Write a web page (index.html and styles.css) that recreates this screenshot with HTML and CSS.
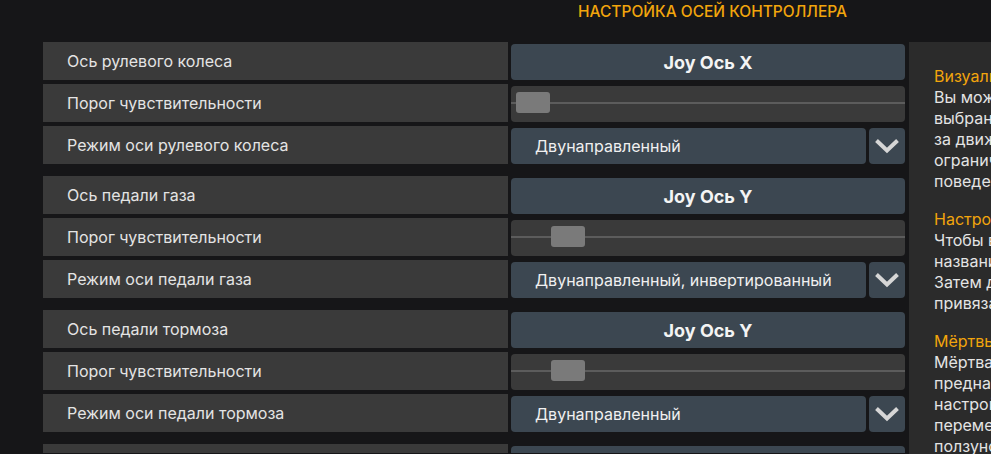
FILE: index.html
```html
<!DOCTYPE html>
<html lang="ru">
<head>
    <meta charset="UTF-8">
    <meta name="viewport" content="width=device-width, initial-scale=1.0">
    <title>Настройка осей контроллера</title>
    <link rel="stylesheet" href="styles.css">
</head>
<body>

    <header class="page-title">
        <h1>НАСТРОЙКА ОСЕЙ КОНТРОЛЛЕРА</h1>
    </header>

    <div class="settings">
        <div class="groups">

            <!-- Рулевое колесо -->
            <div class="group">
                <div class="row">
                    <div class="label">Ось рулевого колеса</div>
                    <button class="bind-btn">Joy Ось X</button>
                </div>
                <div class="row">
                    <div class="label">Порог чувствительности</div>
                    <div class="slider">
                        <div class="track"></div>
                        <div class="thumb" style="left: 5px"></div>
                    </div>
                </div>
                <div class="row">
                    <div class="label">Режим оси рулевого колеса</div>
                    <div class="dropdown">
                        <div class="dropdown-value">Двунаправленный</div>
                        <div class="dropdown-arrow">
                            <svg width="26" height="16" viewBox="0 0 26 16"><polyline points="2.5,2.5 13,12.5 23.5,2.5"/></svg>
                        </div>
                    </div>
                </div>
            </div>

            <!-- Педаль газа -->
            <div class="group">
                <div class="row">
                    <div class="label">Ось педали газа</div>
                    <button class="bind-btn">Joy Ось Y</button>
                </div>
                <div class="row">
                    <div class="label">Порог чувствительности</div>
                    <div class="slider">
                        <div class="track"></div>
                        <div class="thumb" style="left: 40px"></div>
                    </div>
                </div>
                <div class="row">
                    <div class="label">Режим оси педали газа</div>
                    <div class="dropdown">
                        <div class="dropdown-value">Двунаправленный, инвертированный</div>
                        <div class="dropdown-arrow">
                            <svg width="26" height="16" viewBox="0 0 26 16"><polyline points="2.5,2.5 13,12.5 23.5,2.5"/></svg>
                        </div>
                    </div>
                </div>
            </div>

            <!-- Педаль тормоза -->
            <div class="group">
                <div class="row">
                    <div class="label">Ось педали тормоза</div>
                    <button class="bind-btn">Joy Ось Y</button>
                </div>
                <div class="row">
                    <div class="label">Порог чувствительности</div>
                    <div class="slider">
                        <div class="track"></div>
                        <div class="thumb" style="left: 40px"></div>
                    </div>
                </div>
                <div class="row">
                    <div class="label">Режим оси педали тормоза</div>
                    <div class="dropdown">
                        <div class="dropdown-value">Двунаправленный</div>
                        <div class="dropdown-arrow">
                            <svg width="26" height="16" viewBox="0 0 26 16"><polyline points="2.5,2.5 13,12.5 23.5,2.5"/></svg>
                        </div>
                    </div>
                </div>
            </div>

            <!-- Сцепление (уходит за нижний край) -->
            <div class="group">
                <div class="row row-cut">
                    <div class="label"></div>
                    <div class="bind-btn"></div>
                </div>
            </div>

        </div>

        <aside class="help">
            <h3>Визуализация</h3>
            <p>
                <span>Вы можете видеть</span>
                <span>выбранные оси и следить</span>
                <span>за движением, а также</span>
                <span>ограничения и</span>
                <span>поведение осей.</span>
            </p>
            <h3>Настройка осей</h3>
            <p>
                <span>Чтобы выбрать ось, нажмите</span>
                <span>название оси.</span>
                <span>Затем двигайте ось, чтобы</span>
                <span>привязать её.</span>
            </p>
            <h3>Мёртвые зоны</h3>
            <p>
                <span>Мёртвая зона</span>
                <span>предназначена для</span>
                <span>настройки чувствительности</span>
                <span>перемещения. Используйте</span>
                <span>ползунок.</span>
            </p>
        </aside>
    </div>

</body>
</html>
```

FILE: styles.css
```css
body {
    margin: 0;
    background-color: #161618;
    color: #e4e4e4;
    font-family: Inter, "Noto Sans", Arial, sans-serif;
    font-size: 16px;
    overflow: hidden;
    height: 454px;
}
.page-title {
    height: 42px;
    padding-left: 434px;
    text-align: center;
}
.page-title h1 {
    margin: 0;
    padding-top: 2px;
    font-size: 15.5px;
    font-weight: 500;
    color: #f2a50c;
    line-height: 20px;
}
.settings {
    display: flex;
    padding-left: 43px;
}
.groups {
    display: flex;
    flex-direction: column;
    gap: 12px;
    width: 862px;
}
.group {
    display: flex;
    flex-direction: column;
    gap: 4px;
}
.row {
    display: grid;
    grid-template-columns: 465px 394px;
    column-gap: 3px;
    height: 38px;
}
.row-cut {
    height: 9px;
    overflow: hidden;
}
.label {
    display: flex;
    align-items: center;
    padding-left: 24px;
    background-color: #3a3a3a;
}
.bind-btn,
.slider,
.dropdown {
    margin-top: 2px;
    height: 36px;
}
.bind-btn {
    border: none;
    border-radius: 4px;
    background-color: #3c4751;
    color: #f4f4f4;
    font-family: Inter, "Noto Sans", Arial, sans-serif;
    font-size: 18px;
    font-weight: 700;
    padding: 0;
}
.slider {
    position: relative;
    border-radius: 4px;
    background-color: #3a3a3a;
}
.track {
    position: absolute;
    left: 0;
    right: 0;
    top: 16px;
    height: 2px;
    background-color: #5c5c5c;
}
.thumb {
    position: absolute;
    top: 6px;
    width: 34px;
    height: 21px;
    border-radius: 3px;
    background-color: #7a7a7a;
}
.dropdown {
    display: flex;
    gap: 3px;
}
.dropdown-value {
    flex: 1;
    display: flex;
    align-items: center;
    padding-left: 24px;
    border-radius: 4px;
    background-color: #3c4751;
    color: #f0f0f0;
}
.dropdown-arrow {
    width: 36px;
    display: flex;
    align-items: center;
    justify-content: center;
    border-radius: 4px;
    background-color: #3c4751;
}
.dropdown-arrow polyline {
    fill: none;
    stroke: #d6d6d6;
    stroke-width: 4;
}
.help {
    flex: 1;
    margin-left: 4px;
    height: 412px;
    padding: 24px 0 0 25px;
    background-color: #2b2b2b;
    white-space: nowrap;
    overflow: hidden;
    line-height: 21px;
}
.help h3 {
    margin: 0;
    font-size: 16px;
    font-weight: 400;
    color: #f2a50c;
}
.help p {
    margin: 0 0 17px;
}
.help p span {
    display: block;
}
```
